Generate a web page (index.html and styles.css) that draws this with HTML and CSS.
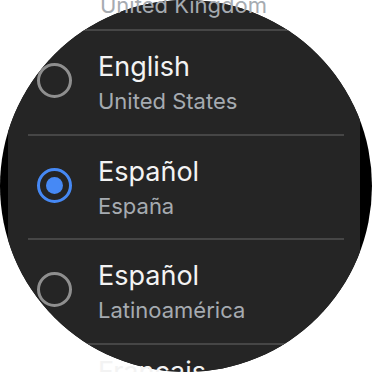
FILE: index.html
```html
<!DOCTYPE html>
<html lang="en">
<head>
<meta charset="utf-8">
<title>Language</title>
<link rel="stylesheet" href="styles.css">
</head>
<body>
<div class="watch">
  <div class="face">
    <div class="panel">
      <div class="rule"></div>
      <div class="rule"></div>
      <div class="rule"></div>
      <div class="rule"></div>
    </div>
  </div>
  <div class="list">
    <div class="peek-top"><div class="sub">United Kingdom</div></div>
    <div class="row">
      <span class="radio"></span>
      <div class="text"><div class="title">English</div><div class="sub">United States</div></div>
    </div>
    <div class="row">
      <span class="radio checked"></span>
      <div class="text"><div class="title">Español</div><div class="sub">España</div></div>
    </div>
    <div class="row">
      <span class="radio"></span>
      <div class="text"><div class="title">Español</div><div class="sub">Latinoamérica</div></div>
    </div>
    <div class="row peek-bottom">
      <span class="radio-space"></span>
      <div class="text"><div class="title">Français</div></div>
    </div>
  </div>
</div>
</body>
</html>
```
FILE: styles.css
```css
html, body {
  margin: 0;
  padding: 0;
  background: #ffffff;
  overflow: hidden;
}
.watch {
  width: 372px;
  height: 372px;
  display: grid;
  grid-template-columns: 372px;
  grid-template-rows: 372px;
  overflow: hidden;
  font-family: Inter, "Noto Sans", sans-serif;
}
.face, .list {
  grid-area: 1 / 1;
}
.face {
  width: 372px;
  height: 372px;
  border-radius: 50%;
  background: #000000;
  overflow: hidden;
  display: flex;
}
.panel {
  flex: 1;
  margin: 0 12px 0 8px;
  background: #252525;
  display: flex;
  flex-direction: column;
  gap: 102.5px;
  padding-top: 29px;
}
.rule {
  height: 2px;
  flex: none;
  margin: 0 16px 0 20px;
  background: #464646;
}
.list {
  display: flex;
  flex-direction: column;
  min-height: 0;
}
.peek-top {
  margin-top: -9px;
  height: 40px;
  padding-left: 100px;
  flex: none;
  box-sizing: border-box;
}
.row {
  height: 104.5px;
  flex: none;
  display: flex;
  align-items: flex-start;
  padding-top: 19px;
  box-sizing: border-box;
}
.peek-bottom {
  padding-top: 10px;
}
.radio, .radio-space {
  width: 35px;
  height: 35px;
  flex: none;
  margin: 13px 26px 0 37px;
  box-sizing: border-box;
}
.radio {
  border-radius: 50%;
  border: 3px solid #8f8f8f;
  display: flex;
  align-items: center;
  justify-content: center;
}
.radio.checked {
  border-color: #4689f5;
}
.radio.checked::after {
  content: "";
  width: 17px;
  height: 17px;
  border-radius: 50%;
  background: #4689f5;
}
.title {
  font-size: 27px;
  line-height: 33px;
  color: #f3f3f3;
}
.sub {
  font-size: 22px;
  line-height: 28px;
  margin-top: 4px;
  color: #a6abb1;
}
.peek-top .sub {
  margin-top: 0;
}
```
